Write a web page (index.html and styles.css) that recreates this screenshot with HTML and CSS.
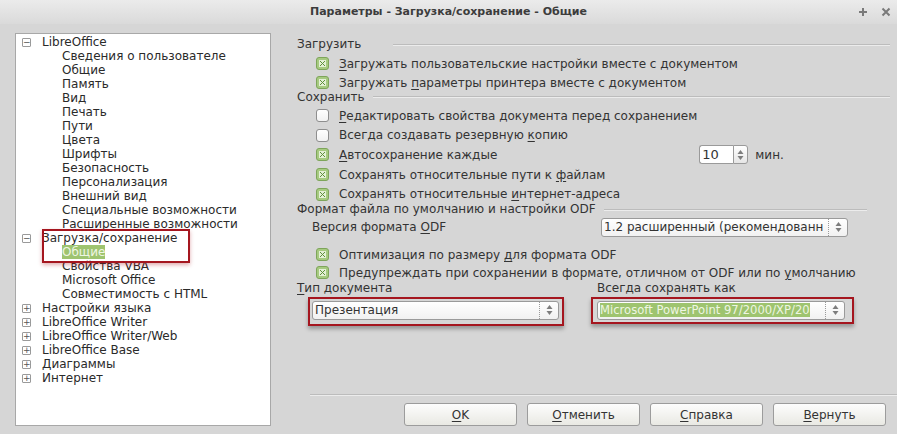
FILE: index.html
```html
<!DOCTYPE html>
<html>
<head>
  <title>Параметры - Загрузка/сохранение - Общие</title>
  <link rel="stylesheet" href="styles.css">
</head>
<body>
  <!-- Window title -->
  <div class="titlebar">
    <span class="title">Параметры - Загрузка/сохранение - Общие</span>
    <span class="win-btns">
      <svg width="10" height="10" viewBox="0 0 10 10"><path d="M5 1v8M1 5h8" stroke="#7a7a7a" stroke-width="2"/></svg>
      <svg width="10" height="10" viewBox="0 0 10 10"><path d="M1.5 1.5l7 7M8.5 1.5l-7 7" stroke="#7a7a7a" stroke-width="2"/></svg>
    </span>
  </div>

  <div class="main">
    <!-- Options tree -->
    <div class="tree">
      <div class="node"><span class="exp">&minus;</span>LibreOffice</div>
      <div class="leaf">Сведения о пользователе</div>
      <div class="leaf">Общие</div>
      <div class="leaf">Память</div>
      <div class="leaf">Вид</div>
      <div class="leaf">Печать</div>
      <div class="leaf">Пути</div>
      <div class="leaf">Цвета</div>
      <div class="leaf">Шрифты</div>
      <div class="leaf">Безопасность</div>
      <div class="leaf">Персонализация</div>
      <div class="leaf">Внешний вид</div>
      <div class="leaf">Специальные возможности</div>
      <div class="leaf">Расширенные возможности</div>
      <div class="mark">
        <div class="node"><span class="exp">&minus;</span>Загрузка/сохранение</div>
        <div class="leaf"><span class="selected">Общие</span></div>
      </div>
      <div class="leaf">Свойства VBA</div>
      <div class="leaf">Microsoft Office</div>
      <div class="leaf">Совместимость с HTML</div>
      <div class="node"><span class="exp">+</span>Настройки языка</div>
      <div class="node"><span class="exp">+</span>LibreOffice Writer</div>
      <div class="node"><span class="exp">+</span>LibreOffice Writer/Web</div>
      <div class="node"><span class="exp">+</span>LibreOffice Base</div>
      <div class="node"><span class="exp">+</span>Диаграммы</div>
      <div class="node"><span class="exp">+</span>Интернет</div>
    </div>

    <div class="right">
      <div class="options">
        <div class="heading h1">Загрузить</div>
        <div class="check first"><span class="cb on"></span><span><u>З</u>агружать пользовательские настройки вместе с документом</span></div>
        <div class="check"><span class="cb on"></span><span>Загружать <u>п</u>араметры принтера вместе с документом</span></div>

        <div class="heading h2">Сохранить</div>
        <div class="check row2 first"><span class="cb"></span><span><u>Р</u>едактировать свойства документа перед сохранением</span></div>
        <div class="check row2"><span class="cb"></span><span>Всегда создавать резервную <u>к</u>опию</span></div>
        <div class="check row2">
          <span class="cb on"></span><span><u>А</u>втосохранение каждые</span>
          <span class="spin">
            <span class="spin-field">10</span>
            <span class="spin-btn">
              <svg width="7" height="12" viewBox="0 0 7 12"><path d="M3.5 1L6.5 5h-6z M3.5 11L0.5 7h6z" fill="#7d7d7d"/></svg>
            </span>
          </span>
          <span class="unit">мин.</span>
        </div>
        <div class="check row2"><span class="cb on"></span><span>Сохранять относительные пути к <u>ф</u>айлам</span></div>
        <div class="check row2"><span class="cb on"></span><span>Сохранять относительные <u>и</u>нтернет-адреса</span></div>

        <div class="heading h3">Формат файла по умолчанию и настройки ODF</div>
        <div class="version">
          <span class="version-label">Версия формата <u>O</u>DF</span>
          <span class="combo">
            <span class="combo-text">1.2 расширенный (рекомендованн</span>
            <span class="combo-btn"><svg width="7" height="12" viewBox="0 0 7 12"><path d="M3.5 1L6.5 5h-6z M3.5 11L0.5 7h6z" fill="#7d7d7d"/></svg></span>
          </span>
        </div>
        <div class="check row3 first"><span class="cb on"></span><span>Оптимизация по размеру <u>д</u>ля формата ODF</span></div>
        <div class="check row3"><span class="cb on"></span><span>Предупреждать при сохранении в формате, отличном от ODF или по <u>у</u>молчанию</span></div>

        <div class="doc-cols">
          <div class="doc-col">
            <div class="doc-label"><u>Т</u>ип документа</div>
            <div class="pick">
              <span class="combo">
                <span class="combo-text">Презентация</span>
                <span class="combo-btn"><svg width="7" height="12" viewBox="0 0 7 12"><path d="M3.5 1L6.5 5h-6z M3.5 11L0.5 7h6z" fill="#7d7d7d"/></svg></span>
              </span>
            </div>
          </div>
          <div class="doc-col second">
            <div class="doc-label">Всегда сохранять как</div>
            <div class="pick">
              <span class="combo">
                <span class="combo-text"><span class="selected">Microsoft PowerPoint 97/2000/XP/20</span></span>
                <span class="combo-btn"><svg width="7" height="12" viewBox="0 0 7 12"><path d="M3.5 1L6.5 5h-6z M3.5 11L0.5 7h6z" fill="#7d7d7d"/></svg></span>
              </span>
            </div>
          </div>
        </div>
      </div>

      <div class="separator"></div>
      <div class="buttons">
        <button><u>O</u>K</button>
        <button><u>О</u>тменить</button>
        <button><u>С</u>правка</button>
        <button><u>В</u>ернуть</button>
      </div>
    </div>
  </div>
</body>
</html>
```

FILE: styles.css
```css
/* Options dialog */
body {
  margin: 0;
  width: 897px;
  height: 434px;
  overflow: hidden;
  background-color: #d6d6d6;
  font-family: 'DejaVu Sans', sans-serif;
  font-size: 12px;
  color: #333;
}

u {
  text-decoration: underline;
  text-underline-offset: 2px;
}

.titlebar {
  position: relative;
  height: 24px;
  line-height: 23px;
  text-align: center;
  background: linear-gradient(#ebebeb, #dadada);
}

.title {
  font-weight: bold;
  font-size: 11px;
  color: #3c3c3c;
}

.win-btns {
  position: absolute;
  right: 6px;
  top: 7px;
  display: flex;
  gap: 13px;
}

.main {
  display: flex;
  height: 410px;
  padding-top: 9px;
  box-sizing: border-box;
}

/* Left tree */
.tree {
  flex-shrink: 0;
  width: 256px;
  height: 393px;
  margin-left: 15px;
  box-sizing: border-box;
  padding-top: 1px;
  background-color: #fff;
  border: 1px solid #a8a8a8;
  color: #2a2a2a;
}

.node, .leaf {
  height: 14px;
  line-height: 14px;
  white-space: nowrap;
}

.node {
  display: flex;
  align-items: center;
  padding-left: 6px;
}

.leaf {
  padding-left: 46px;
}

.exp {
  width: 7px;
  height: 7px;
  margin-right: 11px;
  border: 1px solid #9a9a9a;
  border-radius: 1px;
  font-size: 9px;
  line-height: 7px;
  text-align: center;
  color: #555;
}

.selected {
  background-color: #9ec46f;
  color: #eef6e2;
}

.mark {
  position: relative;
}

.mark::after {
  content: "";
  position: absolute;
  left: 26px;
  top: -2px;
  width: 144px;
  height: 30px;
  border: 2px solid #a5161f;
  box-shadow: 0 2px 4px rgba(170, 20, 30, 0.35);
}

/* Right panel */
.right {
  flex: 1;
  min-width: 0;
  display: flex;
  flex-direction: column;
  margin-left: 26px;
  padding-top: 3px;
}

.options {
  flex: 1;
}

.heading {
  display: flex;
  align-items: center;
  height: 17px;
  line-height: 17px;
  white-space: nowrap;
}

.heading::after {
  content: "";
  flex: 1;
  margin: 0 7px 0 8px;
  border-top: 1px solid #bcbcbc;
  border-bottom: 1px solid #ececec;
}

.heading.h1::after {
  margin-left: 32px;
}

.heading.h2 {
  margin-top: -3px;
  height: 16px;
}

.heading.h3 {
  margin-top: -2px;
  height: 16px;
}

.heading.h3::after {
  margin-right: 30px;
}

.check {
  display: flex;
  align-items: center;
  height: 19px;
  padding-left: 19px;
  white-space: nowrap;
}

.check.first {
  margin-top: 1px;
}

.check.row2 {
  height: 19.6px;
}

.check.row3 {
  height: 18px;
}

.check.row3.first {
  margin-top: 9px;
}

.cb {
  flex-shrink: 0;
  width: 11px;
  height: 11px;
  margin-right: 10px;
  border: 1px solid #8e8e8e;
  border-radius: 3px;
  background: linear-gradient(#fff, #f2f2f2);
}

.cb.on {
  border-color: #7ea55a;
  background-color: #a6ca80;
  background-image:
    linear-gradient(45deg, transparent 44%, #5f8f3c 44%, #5f8f3c 56%, transparent 56%),
    linear-gradient(-45deg, transparent 44%, #5f8f3c 44%, #5f8f3c 56%, transparent 56%),
    linear-gradient(#e4f0d6, #e4f0d6);
  background-size: 5px 5px, 5px 5px, 7px 7px;
  background-position: center, center, center;
  background-repeat: no-repeat;
}

.spin {
  display: flex;
  margin-left: 202px;
  height: 19px;
}

.spin-field {
  width: 31px;
  padding-left: 2px;
  line-height: 17px;
  font-size: 13px;
  background: #fff;
  border: 1px solid #9a9a9a;
  border-right: none;
  border-radius: 3px 0 0 3px;
}

.spin-btn {
  width: 13px;
  display: flex;
  align-items: center;
  justify-content: center;
  background: linear-gradient(#fff, #e6e6e6);
  border: 1px solid #9a9a9a;
  border-radius: 0 3px 3px 0;
}

.unit {
  margin-left: 7px;
}

.version {
  display: flex;
  align-items: center;
  height: 19px;
  padding-left: 15px;
}

.version-label {
  width: 289px;
}

.combo {
  display: flex;
  width: 247px;
  height: 19px;
  box-sizing: border-box;
  background: linear-gradient(#fff, #f1f1f1);
  border: 1px solid #9a9a9a;
  border-radius: 3px;
  white-space: nowrap;
}

.combo-text {
  flex: 1;
  overflow: hidden;
  padding-left: 2px;
  line-height: 17px;
  font-size: 12px;
}

.combo-btn {
  width: 18px;
  display: flex;
  align-items: center;
  justify-content: center;
  border-left: 1px dotted #9a9a9a;
}

.doc-cols {
  display: flex;
  margin-top: -1px;
}

.doc-col {
  display: flex;
  flex-direction: column;
  align-items: flex-start;
  width: 303px;
}

.doc-label {
  height: 14px;
  line-height: 14px;
}

/* red annotation frames round the two document combos */
.pick {
  margin-top: 2px;
  margin-left: 11px;
  padding: 2px 3px 4px 2px;
  border: 2px solid #a5161f;
  box-shadow: 0 3px 4px rgba(0, 0, 0, 0.3);
}

.doc-col.second .pick {
  margin-left: -6px;
  padding: 2px 7px 2px 4px;
}

.doc-col.second .combo {
  width: 248px;
}

.doc-col.second .combo-text {
  font-size: 11.6px;
}

.separator {
  margin: 0 0 0 13px;
  border-top: 1px solid #bcbcbc;
  border-bottom: 1px solid #ececec;
}

.buttons {
  display: flex;
  justify-content: flex-end;
  gap: 10px;
  padding: 7px 11px 8px 0;
}

button {
  width: 113px;
  height: 23px;
  padding: 0;
  font-family: 'DejaVu Sans', sans-serif;
  font-size: 12px;
  color: #333;
  background: linear-gradient(#fdfdfd, #e9e9e3);
  border: 1px solid #9c9c9c;
  border-radius: 3px;
}
```
